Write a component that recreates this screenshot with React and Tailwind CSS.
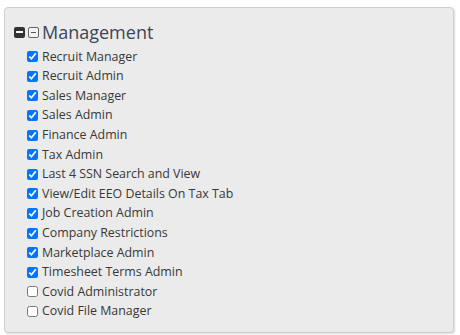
import React from "react";

const roles = [
  { name: "Recruit Manager", checked: true },
  { name: "Recruit Admin", checked: true },
  { name: "Sales Manager", checked: true },
  { name: "Sales Admin", checked: true },
  { name: "Finance Admin", checked: true },
  { name: "Tax Admin", checked: true },
  { name: "Last 4 SSN Search and View", checked: true },
  { name: "View/Edit EEO Details On Tax Tab", checked: true },
  { name: "Job Creation Admin", checked: true },
  { name: "Company Restrictions", checked: true },
  { name: "Marketplace Admin", checked: true },
  { name: "Timesheet Terms Admin", checked: true },
  { name: "Covid Administrator", checked: false },
  { name: "Covid File Manager", checked: false },
];

const App = () => {
  return (
    <div className="w-[460px] h-[335px] bg-white pt-[7px] pl-[4px]" style={{ fontFamily: "'Open Sans', 'Liberation Sans', sans-serif" }}>
      <div className="w-[450px] h-[326px] bg-[#ebebeb] border border-[#cfcfcf] rounded-[4px] shadow-[1px_1px_2px_rgba(0,0,0,0.15)] pl-[9px] pt-[14px]">
        {/* header */}
        <div className="flex items-center h-[20px]">
          <span className="w-[11px] h-[11px] bg-[#333] rounded-[2px] flex items-center justify-center">
            <span className="w-[7px] h-[2px] bg-white" />
          </span>
          <span className="ml-[3px] w-[11px] h-[11px] border border-[#666] rounded-[2px] flex items-center justify-center bg-white/40">
            <span className="w-[5px] h-[1px] bg-[#555]" />
          </span>
          <span className="ml-[3px] text-[18px] text-[#3b4657] leading-none">Management</span>
        </div>
        {/* roles */}
        <div className="mt-[5px] ml-[13px] flex flex-col">
          {roles.map((r, i) => (
            <label key={i} className="flex items-center h-[19.6px]">
              <input
                type="checkbox"
                defaultChecked={r.checked}
                className="w-[11px] h-[11px] m-0 accent-[#0075ff]"
              />
              <span className="ml-[4px] text-[12.4px] text-[#383838] leading-none">{r.name}</span>
            </label>
          ))}
        </div>
      </div>
    </div>
  );
};

export default App;
